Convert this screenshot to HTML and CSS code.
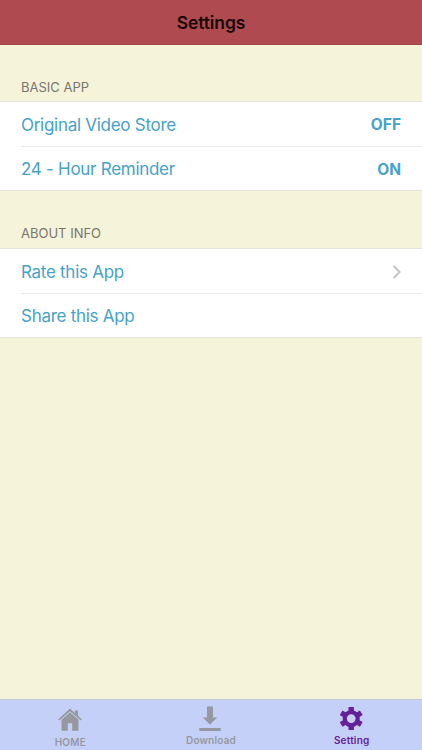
FILE: index.html
```html
<!DOCTYPE html>
<html lang="en">
<head>
    <meta charset="UTF-8">
    <meta name="viewport" content="width=device-width, initial-scale=1.0">
    <title>Settings</title>
    <link rel="stylesheet" href="styles.css">
</head>
<body>
    <header class="navbar">
        <h1>Settings</h1>
    </header>

    <main class="content">
        <section class="group">
            <h2>BASIC APP</h2>
            <ul class="list">
                <li class="row"><span class="label">Original Video Store</span><span class="value">OFF</span></li>
                <li class="row"><span class="label">24 - Hour Reminder</span><span class="value">ON</span></li>
            </ul>
        </section>

        <section class="group">
            <h2>ABOUT INFO</h2>
            <ul class="list">
                <li class="row">
                    <span class="label">Rate this App</span>
                    <svg class="chevron" width="9" height="14" viewBox="0 0 9 14">
                        <path d="M1.7 1L7.7 7L1.7 13" fill="none" stroke="#c3c3c8" stroke-width="1.9"/>
                    </svg>
                </li>
                <li class="row"><span class="label">Share this App</span></li>
            </ul>
        </section>
    </main>

    <nav class="tabbar">
        <a class="tab home">
            <svg width="24" height="24" viewBox="0 0 24 24" fill="currentColor">
                <path d="M12 .6L16.8 4.9V2.4H20V7.8L23.7 11.2L22.7 12.5L12 3.2L1.3 12.5L.3 11.2Z"/>
                <path d="M12 4.2L20.5 11.7V22.7H14.2V15.2H9.8V22.7H3.5V11.7Z"/>
            </svg>
            <span>HOME</span>
        </a>
        <a class="tab download">
            <svg width="24" height="26" viewBox="0 0 24 26" fill="currentColor">
                <path d="M8 .6H14V11.4H18.2L11 18.8L3.8 11.4H8Z"/>
                <path d="M.3 22H21.7V25H.3Z"/>
            </svg>
            <span>Download</span>
        </a>
        <a class="tab setting active">
            <svg width="24" height="24" viewBox="-11.2 -11.6 24 24" fill="none" stroke="currentColor">
                <circle r="6.5" stroke-width="4.2"/>
                <path stroke-width="5.4" d="M0-11.5V-6.5M0 11.5V6.5M-10.1-5.85L-5.6-3.25M10.1-5.85L5.6-3.25M-10.1 5.85L-5.6 3.25M10.1 5.85L5.6 3.25"/>
            </svg>
            <span>Setting</span>
        </a>
    </nav>
</body>
</html>
```

FILE: styles.css
```css
* {
    margin: 0;
    padding: 0;
    box-sizing: border-box;
}

body {
    height: 100vh;
    display: flex;
    flex-direction: column;
    background: #f5f3da;
    font-family: Inter, sans-serif;
}

.navbar {
    height: 45px;
    display: flex;
    justify-content: center;
    align-items: center;
    background: #af4a51;
    border-bottom: 1px solid #a2464a;
}

.navbar h1 {
    font-size: 17.5px;
    font-weight: 600;
    letter-spacing: -0.1px;
    color: #180608;
}

.content {
    flex: 1;
}

.group h2 {
    height: 56px;
    padding: 34px 21px 0;
    font-size: 13px;
    line-height: 16px;
    font-weight: 400;
    color: #77766f;
}

.group + .group h2 {
    height: 57px;
}

.list {
    list-style: none;
    background: white;
    border-top: 1px solid #e5e4dc;
    border-bottom: 1px solid #e5e4dc;
}

.row {
    height: 44px;
    margin-left: 21px;
    padding: 1px 21px 0 0;
    display: flex;
    justify-content: space-between;
    align-items: center;
    font-size: 17px;
    color: #45a2c9;
}

.row + .row {
    border-top: 1px solid #e8e8ea;
}

.label {
    letter-spacing: -0.28px;
}

.value {
    font-size: 15.5px;
    font-weight: 700;
}

.tabbar {
    height: 51px;
    display: flex;
    background: #c5d0f8;
    border-top: 1px solid #c3c8d5;
}

.tab {
    flex: 1;
    display: flex;
    flex-direction: column;
    align-items: center;
    justify-content: space-between;
    padding: 7px 0 4px;
    color: #96989f;
    font-size: 10px;
    line-height: 12px;
    font-weight: 600;
    letter-spacing: 0.2px;
}

.home {
    padding: 8px 0 2px;
}

.download {
    padding-top: 6px;
}

.active {
    color: #65209a;
}
```
